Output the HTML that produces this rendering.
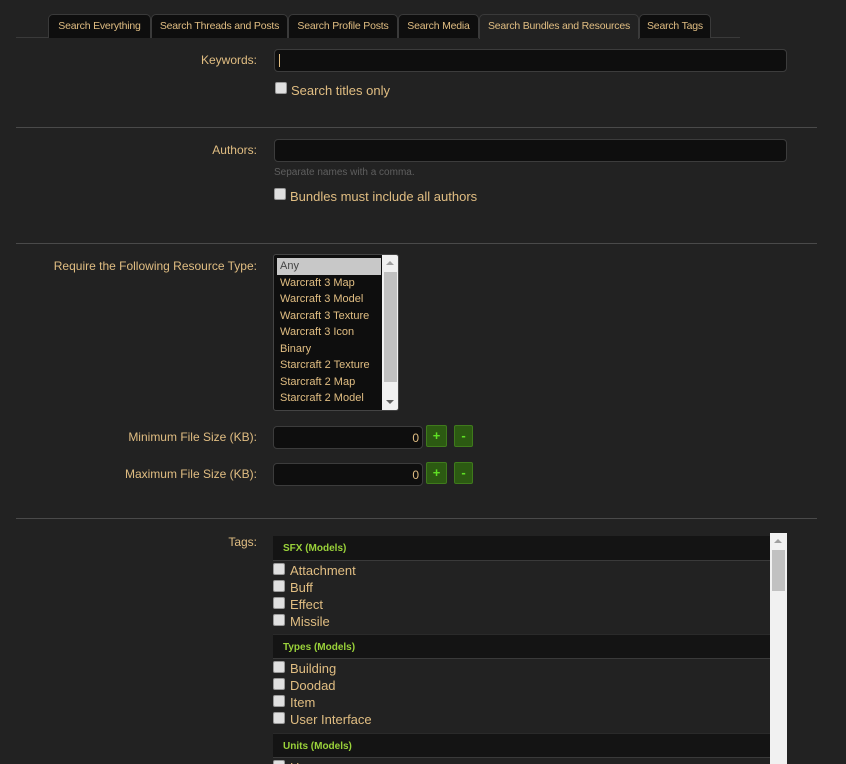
<!DOCTYPE html>
<html><head><style>
*{box-sizing:border-box;margin:0;padding:0}
html,body{width:846px;height:764px;overflow:hidden}
body{background:#222;font-family:"Liberation Sans",sans-serif;color:#e0bd82;position:relative}
.a{position:absolute}
.tab{position:absolute;top:14px;height:24px;border:1px solid #3a3a3a;border-bottom:none;border-radius:5px 5px 0 0;background:#0e0e0e;font-size:10.5px;line-height:23px;text-align:center;color:#e0bd82;white-space:nowrap;letter-spacing:-0.2px}
.hr{position:absolute;left:16px;width:801px;height:1px;background:#4a4a4a}
.lbl{position:absolute;right:589px;font-size:12px;color:#e0bd82;text-align:right;white-space:nowrap}
.inp{position:absolute;background:#0e0e0e;border:1px solid #3c3c3c;border-radius:4px}
.cb{position:absolute;width:12px;height:12px;background:#e0e0e0;border:1px solid #999;border-radius:2px}
.t13{position:absolute;font-size:13px;white-space:nowrap}
.btn{position:absolute;width:21px;height:22px;background:#2c5a12;border:1px solid #3f7a1c;border-radius:2px;color:#5fe024;font-size:13px;text-align:center;line-height:20px;font-weight:bold}
.opt{font-size:11px;height:16.5px;line-height:16px;padding-left:3px;white-space:nowrap}
.th{height:25px;background:#141414;border-bottom:1px solid #3a3a3a;font-size:10px;font-weight:bold;color:#9ad23a;line-height:25px;padding-left:10px}
.it{height:17px;position:relative;font-size:13px;line-height:17px;padding-left:17px}
.it i{position:absolute;left:0;top:1px;width:12px;height:12px;background:#e0e0e0;border:1px solid #999;border-radius:2px}
</style></head><body>
<div class="a" style="left:16px;top:37px;width:724px;height:1px;background:#3a3a3a"></div>
<div class="tab" style="left:48px;width:103px">Search Everything</div>
<div class="tab" style="left:151px;width:137px">Search Threads and Posts</div>
<div class="tab" style="left:288px;width:110px">Search Profile Posts</div>
<div class="tab" style="left:398px;width:81px">Search Media</div>
<div class="tab" style="left:479px;width:160px;background:#222;height:25px">Search Bundles and Resources</div>
<div class="tab" style="left:639px;width:72px">Search Tags</div>

<div class="lbl" style="top:53px">Keywords:</div>
<div class="inp" style="left:274px;top:49px;width:513px;height:23px"><div class="a" style="left:4px;top:4px;width:1px;height:13px;background:#e0bd82"></div></div>
<div class="cb" style="left:275px;top:82px"></div>
<div class="t13" style="left:291px;top:83px">Search titles only</div>
<div class="hr" style="top:127px"></div>

<div class="lbl" style="top:143px">Authors:</div>
<div class="inp" style="left:274px;top:139px;width:513px;height:23px"></div>
<div class="a" style="left:274px;top:167px;font-size:10px;color:#5f5f5f">Separate names with a comma.</div>
<div class="cb" style="left:274px;top:188px"></div>
<div class="t13" style="left:290px;top:189px">Bundles must include all authors</div>
<div class="hr" style="top:243px"></div>

<div class="lbl" style="top:259px">Require the Following Resource Type:</div>
<div class="a" style="left:273px;top:254px;width:126px;height:157px;background:#0e0e0e;border:1px solid #444;border-radius:3px;overflow:hidden">
<div class="a" style="left:3px;top:3px;width:104px">
<div class="opt" style="background:#c8c8c8;color:#444">Any</div>
<div class="opt">Warcraft 3 Map</div><div class="opt">Warcraft 3 Model</div><div class="opt">Warcraft 3 Texture</div><div class="opt">Warcraft 3 Icon</div><div class="opt">Binary</div><div class="opt">Starcraft 2 Texture</div><div class="opt">Starcraft 2 Map</div><div class="opt">Starcraft 2 Model</div>
</div>
<div class="a" style="left:108px;top:0;width:17px;height:156px;background:#f1f1f1">
<div class="a" style="left:4px;top:6px;border:4px solid transparent;border-bottom:4px solid #a0a0a0;border-top:none"></div>
<div class="a" style="left:2px;top:17px;width:13px;height:110px;background:#c1c1c1"></div>
<div class="a" style="left:4px;top:145px;border:4px solid transparent;border-top:4px solid #606060;border-bottom:none"></div>
</div></div>

<div class="lbl" style="top:430px">Minimum File Size (KB):</div>
<div class="inp" style="left:273px;top:426px;width:150px;height:23px"><div class="a" style="right:3px;top:4px;font-size:12px">0</div></div>
<div class="btn" style="left:426px;top:425px">+</div><div class="btn" style="left:454px;top:425px;width:19px">-</div>
<div class="lbl" style="top:467px">Maximum File Size (KB):</div>
<div class="inp" style="left:273px;top:463px;width:150px;height:23px"><div class="a" style="right:3px;top:4px;font-size:12px">0</div></div>
<div class="btn" style="left:426px;top:462px">+</div><div class="btn" style="left:454px;top:462px;width:19px">-</div>
<div class="hr" style="top:518px"></div>

<div class="lbl" style="top:535px">Tags:</div>
<div class="a" style="left:273px;top:536px;width:497px">
<div class="th">SFX (Models)</div>
<div class="it" style="margin-top:1px"><i></i>Attachment</div><div class="it"><i></i>Buff</div><div class="it"><i></i>Effect</div><div class="it"><i></i>Missile</div>
<div class="th" style="border-top:1px solid #2a2a2a;margin-top:4px">Types (Models)</div>
<div class="it" style="margin-top:1px"><i></i>Building</div><div class="it"><i></i>Doodad</div><div class="it"><i></i>Item</div><div class="it"><i></i>User Interface</div>
<div class="th" style="border-top:1px solid #2a2a2a;margin-top:5px">Units (Models)</div>
<div class="it" style="margin-top:1px"><i></i>Hero</div>
</div>
<div class="a" style="left:770px;top:533px;width:17px;height:231px;background:#f1f1f1">
<div class="a" style="left:4px;top:6px;border:4px solid transparent;border-bottom:4px solid #a0a0a0;border-top:none"></div>
<div class="a" style="left:2px;top:17px;width:13px;height:41px;background:#c1c1c1"></div>
</div>
</body></html>
